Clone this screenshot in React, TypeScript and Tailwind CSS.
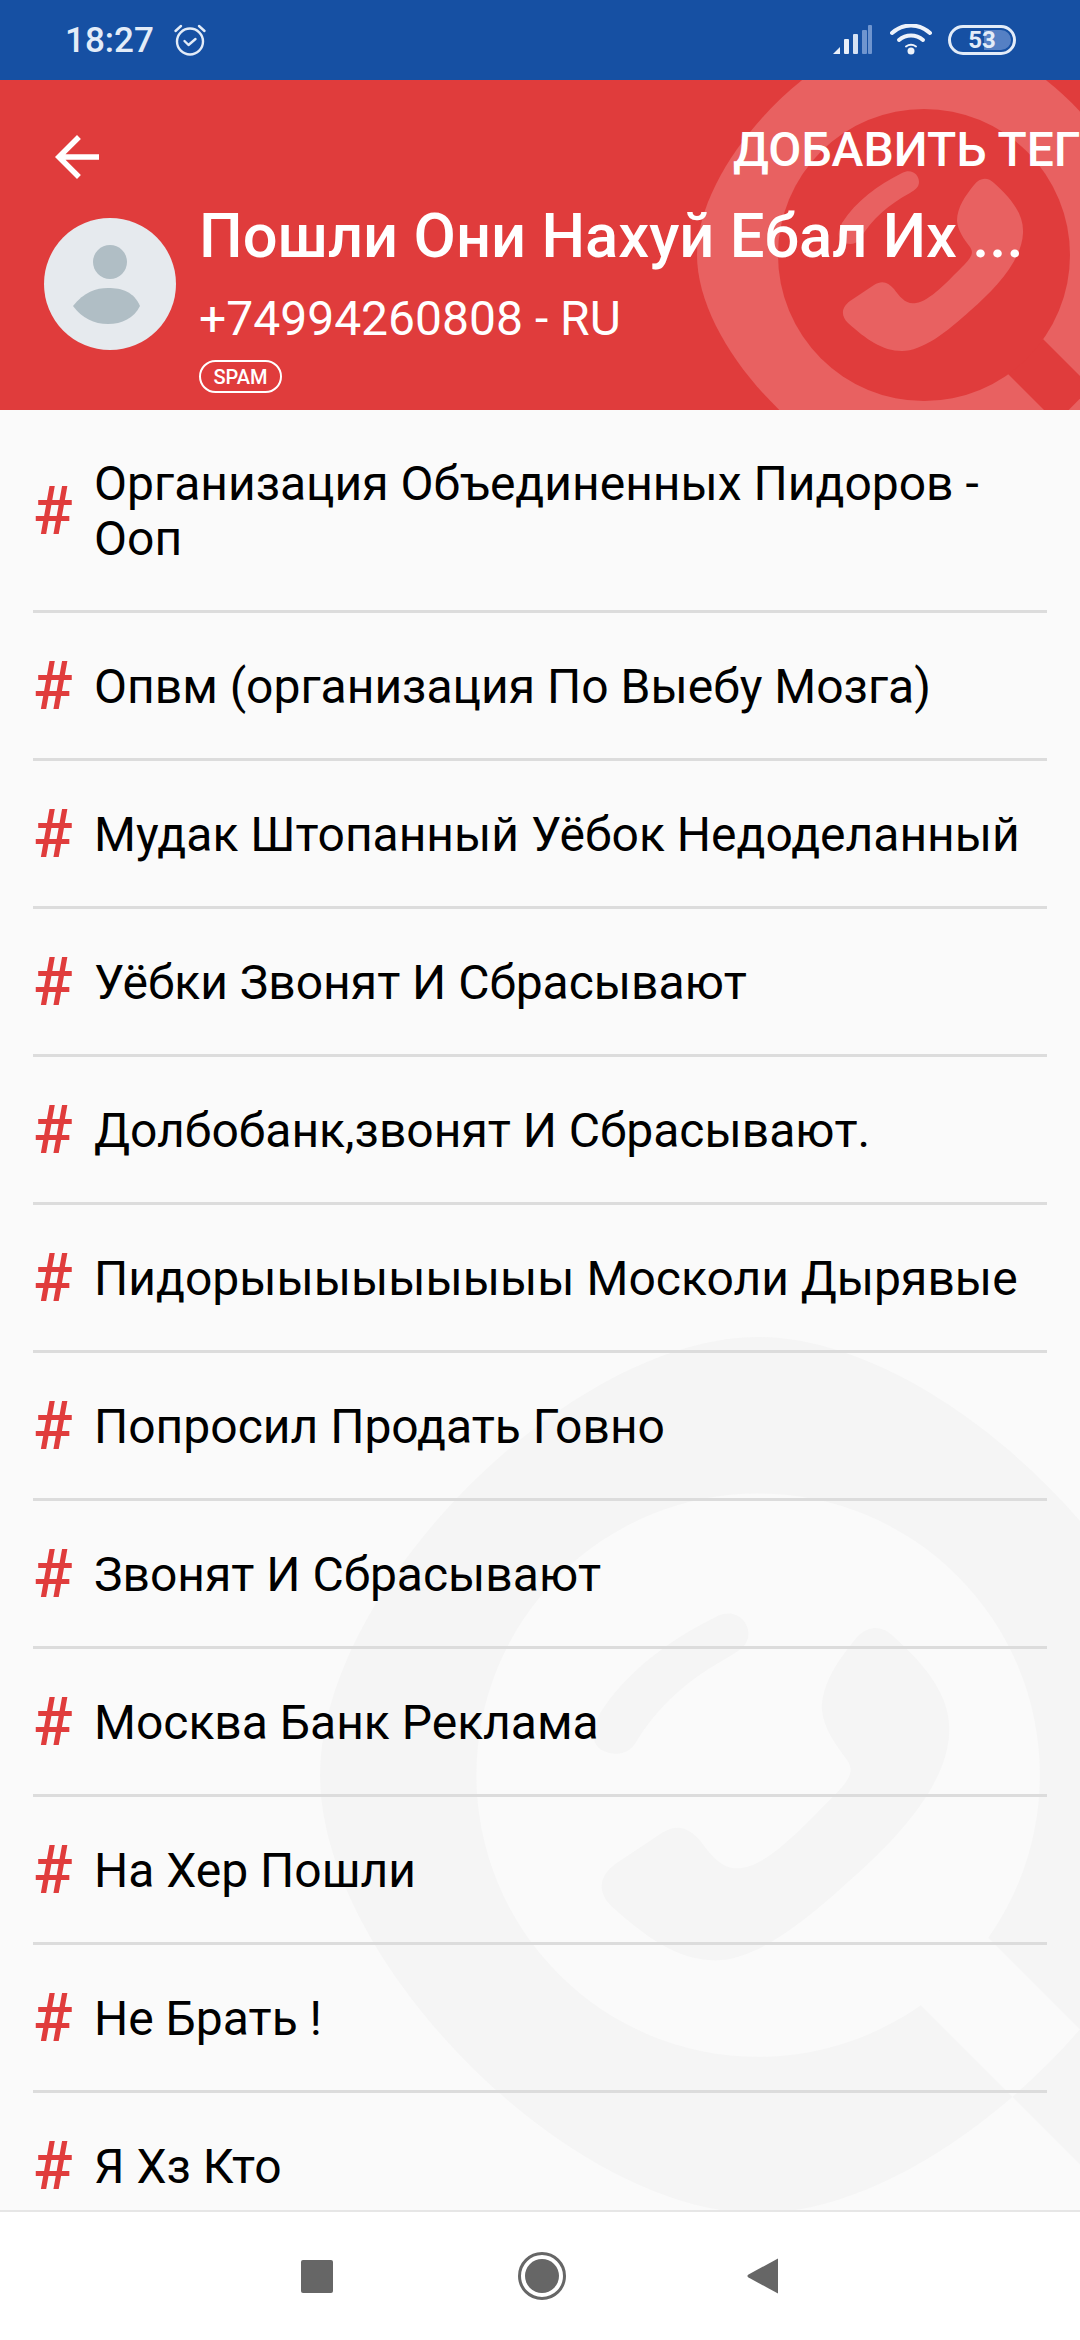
const tags = [
  'Организация Объединенных Пидоров - Ооп',
  'Опвм (организация По Выебу Мозга)',
  'Мудак Штопанный Уёбок Недоделанный',
  'Уёбки Звонят И Сбрасывают',
  'Долбобанк,звонят И Сбрасывают.',
  'Пидорыыыыыыыыы Москоли Дырявые',
  'Попросил Продать Говно',
  'Звонят И Сбрасывают',
  'Москва Банк Реклама',
  'На Хер Пошли',
  'Не Брать !',
  'Я Хз Кто',
];

const outer =
  'M227 0C227 97 97 227 0 227C-97 227 -227 97 -227 0C-227 -97 -97 -227 0 -227C97 -227 227 -97 227 0Z';

function Logo({ id, fill, cut, className }: { id: string; fill: string; cut: string; className: string }) {
  return (
    <svg viewBox="-240 -240 640 640" className={className}>
      <defs>
        <clipPath id={id}>
          <path d={outer} />
        </clipPath>
      </defs>
      <polygon points="83,118 353,388 389,354 119,84" fill={fill} />
      <path d={outer} fill={fill} />
      <polygon points="83,118 353,388 389,354 119,84" fill={cut} clipPath={`url(#${id})`} />
      <circle cx="0" cy="0" r="146" fill={cut} />
      <path
        d="M50 -70C56 -78 64 -78 70 -72C88 -56 100 -40 99 -22C98 6 70 35 47 55C22 78 -2 96 -22 96C-42 96 -58 84 -76 68C-84 60 -82 52 -74 46L-50 30C-42 25 -36 27 -30 34C-24 42 -18 50 -8 48C6 46 24 26 38 12C48 2 50 -2 46 -8C40 -16 34 -24 33 -34C33 -48 42 -60 50 -70Z"
        fill={fill}
      />
      <path
        d="M-22 -82C-12 -87 -5 -80 -5 -73C-5 -68 -9 -65 -14 -62C-36 -50 -52 -36 -64 -16C-68 -10 -76 -10 -81 -13C-87 -17 -86 -24 -82 -32C-68 -54 -46 -70 -22 -82Z"
        fill={fill}
      />
    </svg>
  );
}

function StatusBar() {
  return (
    <div className="h-[80px] shrink-0 bg-[#1650a3] flex items-center pl-[65px] pr-[64px] text-[#e3ecf8]">
      <span className="text-[35px] font-medium leading-none">18:27</span>
      <svg viewBox="0 0 34 34" className="w-[34px] h-[34px] ml-[19px]" fill="none" stroke="currentColor" strokeWidth="2.4" strokeLinecap="round" strokeLinejoin="round">
        <circle cx="17" cy="18.5" r="13" />
        <path d="M11.5 18l4 4 7-6" />
        <path d="M2.5 8L8 3" />
        <path d="M31.5 8L26 3" />
      </svg>
      <svg viewBox="0 0 40 30" className="w-[40px] h-[30px] ml-auto">
        <path d="M0 29L7 22V29Z" fill="#eaf0fa" />
        <rect x="11" y="14" width="5" height="15" rx="1" fill="#eaf0fa" />
        <rect x="20" y="9" width="5" height="20" rx="1" fill="#d6e2f4" />
        <rect x="29" y="5" width="5" height="24" rx="1" fill="#6f95cf" />
        <rect x="35" y="0" width="4" height="29" rx="1" fill="#6f95cf" />
      </svg>
      <svg viewBox="0 0 42 32" className="w-[42px] h-[32px] ml-[17px]" fill="none" stroke="#eef3fb" strokeWidth="4" strokeLinecap="round">
        <path d="M2 9C13 -1 29 -1 40 9" />
        <path d="M9 16C16 10 26 10 33 16" />
        <circle cx="21" cy="27" r="3.5" fill="#eef3fb" stroke="none" />
        <path d="M16 22.5C19 20.5 23 20.5 26 22.5" strokeWidth="2" />
      </svg>
      <div className="relative w-[68px] h-[30px] ml-[16px] rounded-full border-[3px] border-[#e3ecf8] flex items-center justify-center">
        <div className="absolute right-[2px] top-[2px] bottom-[2px] w-[27px] rounded-r-full bg-[#5580c4]" />
        <span className="relative text-[24px] font-bold leading-none text-[#e3ecf8]">53</span>
      </div>
    </div>
  );
}

function Header() {
  return (
    <div className="relative h-[330px] shrink-0 bg-[#e03c3c] overflow-hidden text-white">
      <Logo id="logo-head" fill="#e86161" cut="#e03c3c" className="absolute left-[684px] top-[-65px] w-[640px] h-[640px]" />
      <div className="relative flex flex-col pl-[44px]">
        <div className="flex items-start h-[120px] pt-[44px]">
          <svg viewBox="0 0 24 24" fill="#ffffff" className="w-[66px] h-[66px] shrink-0">
            <path d="M20 11H7.83l5.59-5.59L12 4l-8 8 8 8 1.41-1.41L7.83 13H20v-2z" />
          </svg>
          <span className="ml-[623px] mt-[-6px] text-[48px] font-medium leading-[64px] whitespace-nowrap">ДОБАВИТЬ ТЕГ</span>
        </div>
        <div className="flex items-start">
          <svg viewBox="0 0 132 132" className="w-[132px] h-[132px] mt-[18px] shrink-0">
            <circle cx="66" cy="66" r="66" fill="#e6eaee" />
            <circle cx="66" cy="44" r="17" fill="#b0bec5" />
            <path d="M29 88C40 74 52 70 64 70C78 70 90 74 96 88C90 100 78 106 64 106C50 106 38 100 29 88Z" fill="#b0bec5" />
          </svg>
          <div className="ml-[23px] flex flex-col items-start">
            <span className="text-[61.5px] leading-[72px] font-medium whitespace-nowrap">Пошли Они Нахуй Ебал Их ...</span>
            <span className="text-[48px] leading-[56px] mt-[19px] whitespace-nowrap">+74994260808 - RU</span>
            <span className="mt-[13px] h-[33px] w-[83px] rounded-full border-[2px] border-white text-[20px] font-medium leading-none flex items-center justify-center">SPAM</span>
          </div>
        </div>
      </div>
    </div>
  );
}

function TagRow({ label }: { label: string }) {
  return (
    <div className="flex items-center shrink-0 mx-[33px] pt-[46px] pb-[44px] border-b-[3px] border-[#dcdcdc] last:border-b-0">
      <span className="w-[61px] shrink-0 text-[66px] leading-[55px] font-medium text-[#e03c3c]">#</span>
      <span className="text-[48px] leading-[55px] text-black">{label}</span>
    </div>
  );
}

export default function App() {
  return (
    <div className="w-[1080px] h-[2340px] flex flex-col overflow-hidden bg-white font-['Roboto',sans-serif]">
      <StatusBar />
      <Header />

      {/* Tag list */}
      <div className="relative flex-1 min-h-0 overflow-hidden bg-[#fafafa]">
        <Logo id="logo-list" fill="#f5f5f5" cut="#fafafa" className="absolute left-[295px] top-[902px] w-[1235px] h-[1235px]" />
        <div className="relative flex flex-col">
          {tags.map(tag => (
            <TagRow key={tag} label={tag} />
          ))}
        </div>
      </div>

      {/* Nav bar */}
      <div className="h-[130px] shrink-0 bg-white border-t-[2px] border-[#e6e6e6] flex items-center justify-center">
        <div className="w-[32px] h-[33px] rounded-[2px] bg-[#666666]" />
        <svg viewBox="0 0 48 48" className="w-[48px] h-[48px] ml-[185px]">
          <circle cx="24" cy="24" r="22.5" fill="none" stroke="#666666" strokeWidth="3" />
          <circle cx="24" cy="24" r="17" fill="#666666" />
        </svg>
        <svg viewBox="0 0 32 36" className="w-[32px] h-[36px] ml-[181px]">
          <path d="M31 0.5V35.5L1.5 19.5C0 18.6 0 17.4 1.5 16.5Z" fill="#666666" />
        </svg>
      </div>
    </div>
  );
}
